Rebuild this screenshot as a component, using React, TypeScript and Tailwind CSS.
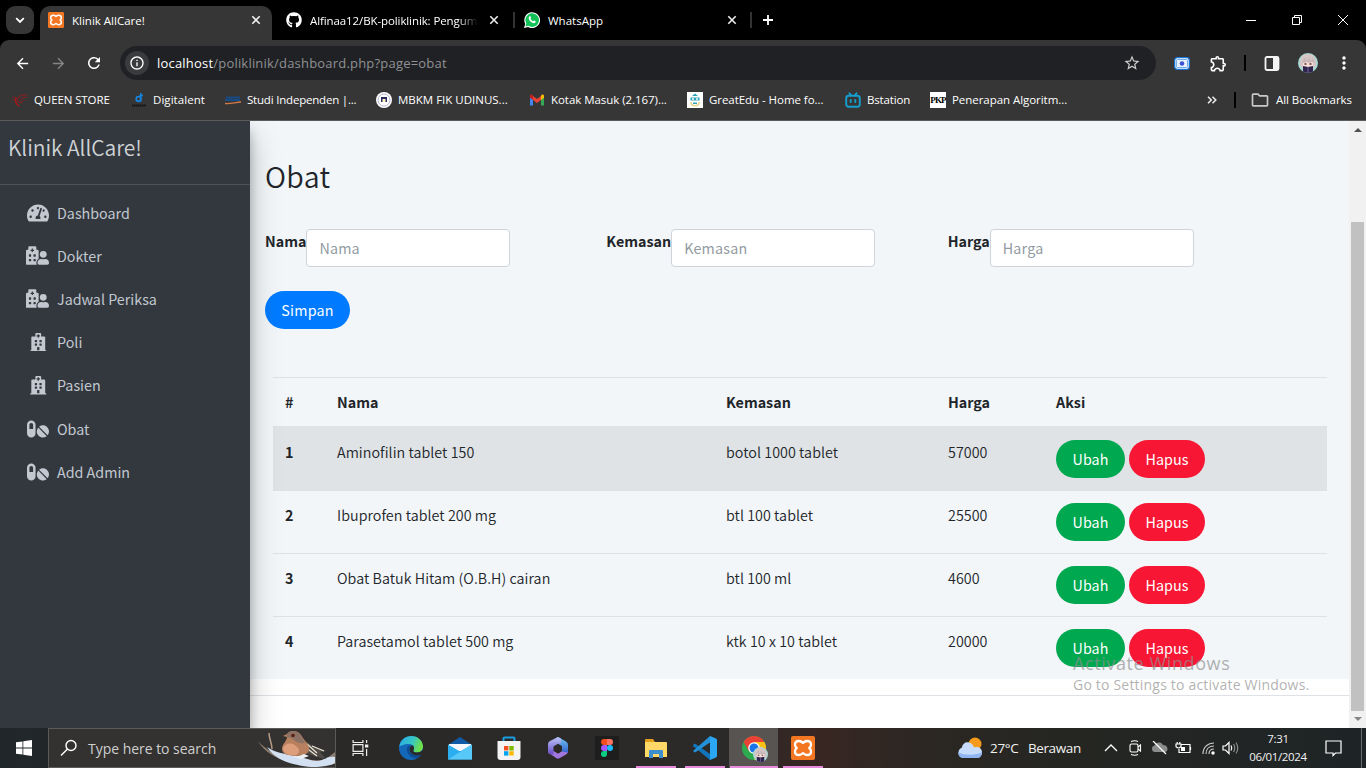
import type { ReactNode } from "react";
import {
  FaGithub,
  FaHospital,
  FaHospitalUser,
  FaPills,
  FaTachometerAlt,
} from "react-icons/fa";
import {
  MdArrowBack,
  MdArrowForward,
  MdMoreVert,
  MdOutlineExtension,
  MdOutlineFolder,
  MdOutlineInfo,
  MdRefresh,
  MdStarBorder,
} from "react-icons/md";

/* ---------- logos ---------- */

function Xampp({ size }: { size: number }) {
  return (
    <svg width={size} height={size} viewBox="0 0 24 24">
      <rect width="24" height="24" rx="2" fill="#f37623" />
      <path
        d="M8 5C5.500 5 4 6.600 4 8.600c0 1.500.7 2.700 1.800 3.400C4.700 12.700 4 13.900 4 15.400 4 17.500 5.500 19 8 19c1.700 0 2.700-.7 4-1.800 1.300 1.100 2.300 1.800 4 1.800 2.500 0 4-1.500 4-3.600 0-1.500-.7-2.700-1.800-3.400C19.300 11.300 20 10.100 20 8.600 20 6.600 18.500 5 16 5c-1.700 0-2.700.7-4 1.800C10.700 5.700 9.700 5 8 5z"
        fill="none"
        stroke="#fff"
        strokeWidth="2.300"
        strokeLinejoin="round"
      />
    </svg>
  );
}

function WhatsApp() {
  return (
    <svg width="16" height="16" viewBox="0 0 16 16">
      <path d="M0 16l1.200-4.100A7.900 7.900 0 1 1 4.200 15z" fill="#fff" />
      <path d="M1.400 14.600l.9-3.100A6.800 6.800 0 1 1 4.500 13.800z" fill="#12c157" />
      <path
        d="M5.500 4.200c.5-.4.800-.1 1 .3l.5 1.100c.1.400-.6.900-.5 1.200.5 1.100 1.400 1.900 2.500 2.400.4.100.9-.8 1.200-.7l1.300.7c.5.3 0 1.500-.8 1.800-1.500.6-3.600-.7-4.700-2C4.900 7.800 4 5.600 5.500 4.200z"
        fill="#fff"
      />
    </svg>
  );
}

function QueenIcon() {
  return (
    <svg width="16" height="16" viewBox="0 0 16 16" fill="none" stroke="#b0151a" strokeLinecap="round">
      <path d="M1 5c1.500 0 2.500.5 3 1.500M1 8c1 0 2 .3 2.500 1M14.500 3C9 2 5.500 5 5.500 8.500c.5 2.500 4 3 6 .5M14.500 5.500c-3-.5-5 .5-5.500 2.500" strokeWidth=".8" />
      <path d="M4 6c-1 3 0 6 3 8" strokeWidth="1.300" />
    </svg>
  );
}

function DigitalentIcon() {
  return (
    <svg width="16" height="16" viewBox="0 0 16 16" fill="none">
      <circle cx="7.500" cy="7" r="2.300" stroke="#1683dc" strokeWidth="1.700" />
      <path d="M9.800 1v8.500M8.500 3.500H12" stroke="#1683dc" strokeWidth="1.500" />
      <path d="M1 13.500h14" stroke="#151515" strokeWidth="2" strokeDasharray="1.500 .4" />
    </svg>
  );
}

function StudiIcon() {
  return (
    <svg width="16" height="16" viewBox="0 0 16 16" fill="none">
      <path d="M1 5.500h14M0 8h15" stroke="#174b83" strokeWidth="2" />
      <path d="M0 11.500c5 .5 10-1 16-1.500" stroke="#d07949" strokeWidth="1.300" />
    </svg>
  );
}

function MbkmIcon() {
  return (
    <svg width="16" height="16" viewBox="0 0 16 16">
      <circle cx="8" cy="8" r="8" fill="#fff" />
      <circle cx="8" cy="8" r="6" fill="none" stroke="#b3b4cc" strokeWidth="1" />
      <rect x="5" y="5" width="6" height="5" fill="#292a60" />
      <rect x="6.500" y="7" width="3" height="3" fill="#fff3c2" />
    </svg>
  );
}

function GmailIcon() {
  return (
    <svg width="16" height="16" viewBox="0 0 16 16">
      <path d="M1 4v9.500h3V6.500z" fill="#4285f4" />
      <path d="M15 4v9.500h-3V6.500z" fill="#34a853" />
      <path d="M12 4v4l3-2.300V4c0-1.300-1.500-1.900-2.400-1.200z" fill="#fbbc04" />
      <path d="M4 4v4l4 3 4-3V4L8 7z" fill="#ea4335" />
      <path d="M1 4v1.700L4 8V4l-.6-1.200C2.500 2.100 1 2.700 1 4z" fill="#c5221f" />
    </svg>
  );
}

function GreatEduIcon() {
  return (
    <svg width="16" height="16" viewBox="0 0 16 16">
      <rect width="16" height="16" fill="#fff" />
      <path d="M8 1.500L11 4H5zM3.500 5.500h9v3h-9z" fill="#2aa3b8" />
      <circle cx="6" cy="7" r="1" fill="#fff" />
      <circle cx="10" cy="7" r="1" fill="#fff" />
      <path d="M4 10c0 5 8 5 8 0" fill="none" stroke="#e6d48b" strokeWidth="1.500" />
      <path d="M6 10.500h4v1.500H6z" fill="#2aa3b8" />
    </svg>
  );
}

function BstationIcon() {
  return (
    <svg width="16" height="16" viewBox="0 0 16 16" fill="none" stroke="#159fd0" strokeWidth="1.900" strokeLinecap="round">
      <path d="M4.500 1.200l1.700 2.300M11.500 1.200L9.800 3.500M5.700 8v2M10.300 8v2" />
      <rect x="1.200" y="3.800" width="13.600" height="11" rx="2.500" />
    </svg>
  );
}

function PkpIcon() {
  return (
    <span className="flex size-4 items-center justify-center overflow-hidden bg-white font-['Liberation_Serif',serif] text-[9px] leading-none font-bold tracking-[-0.8px] text-black">
      PKP
    </span>
  );
}

function Avatar({ size }: { size: number }) {
  return (
    <svg width={size} height={size} viewBox="0 0 20 20">
      <defs>
        <clipPath id={`face${size}`}>
          <circle cx="10" cy="10" r="10" />
        </clipPath>
      </defs>
      <g clipPath={`url(#face${size})`}>
        <rect width="20" height="20" fill="#a8d8d4" />
        <path d="M2 12C1 4 6 1 10 1s9 3 8 11l-2 3H4z" fill="#d5c5c5" />
        <path d="M5 9h10v5c-2 3-8 3-10 0z" fill="#f5dfd6" />
        <path d="M4 9l3-5 2 4 2-4 2 4 2-3 2 5-3-1-3 1-2-1-3 1z" fill="#c8b6b9" />
        <path d="M6.500 11h2M11.500 11h2" stroke="#5e3434" strokeWidth="1.300" />
        <path d="M5 13l5 1 5-1v7H5z" fill="#30244e" />
        <path d="M10 14v6" stroke="#7365a0" />
      </g>
    </svg>
  );
}

/* ---------- browser chrome ---------- */

function Close() {
  return (
    <svg width="10" height="10" viewBox="0 0 10 10" stroke="#eee" strokeWidth="1.600">
      <path d="M1.300 1.300l7.400 7.400M8.700 1.300L1.300 8.700" />
    </svg>
  );
}

function TitleBar() {
  return (
    <div className="flex h-10 bg-black text-[11.5px] text-white">
      <div className="mt-1.5 ml-1.5 flex size-7 items-center justify-center rounded-[9px] bg-[#363636]">
        <svg width="10" height="7" viewBox="0 0 10 7" fill="none" stroke="#fff" strokeWidth="1.800">
          <path d="M1.200 1.200L5 5l3.800-3.800" />
        </svg>
      </div>
      <div className="mt-1.5 ml-1.5 flex h-[34px] w-[232px] items-center rounded-t-[10px] bg-[#363636] pr-[11px] pb-1.5 pl-2">
        <Xampp size={16} />
        <span className="ml-2 flex-1 pt-px">Klinik AllCare!</span>
        <Close />
      </div>
      <div className="flex w-[242px] items-center pr-[15px] pl-3.5">
        <FaGithub className="size-4 shrink-0" />
        <span className="ml-2 w-[167px] overflow-hidden pt-px tracking-[-0.1px] whitespace-nowrap [mask-image:linear-gradient(to_right,black_148px,transparent_168px)]">
          Alfinaa12/BK-poliklinik: Pengumpulan
        </span>
        <span className="ml-auto">
          <Close />
        </span>
      </div>
      <div className="flex w-[237px] items-center">
        <span className="-ml-px h-4 w-0.5 bg-[#333]" />
        <span className="ml-[9px]">
          <WhatsApp />
        </span>
        <span className="ml-2 flex-1 pt-px">WhatsApp</span>
        <span className="mr-3.5">
          <Close />
        </span>
      </div>
      <div className="flex flex-1 items-center">
        <span className="-ml-px h-4 w-0.5 bg-[#333]" />
        <svg className="ml-[10px]" width="12" height="12" viewBox="0 0 12 12" stroke="#fff" strokeWidth="1.800">
          <path d="M6 1v10M1 6h10" />
        </svg>
      </div>
      <div className="flex w-[138px]">
        <span className="flex w-[46px] items-center justify-center">
          <svg width="10" height="10" viewBox="0 0 10 10" stroke="#fff">
            <path d="M0 5.500h10" />
          </svg>
        </span>
        <span className="flex w-[46px] items-center justify-center">
          <svg width="10" height="10" viewBox="0 0 10 10" stroke="#fff" fill="none">
            <path d="M.5 2.500h7v7h-7zM2.500 2.500v-2h7v7h-2" />
          </svg>
        </span>
        <span className="flex w-[46px] items-center justify-center">
          <svg width="10" height="10" viewBox="0 0 10 10" stroke="#fff">
            <path d="M0 0l10 10M10 0L0 10" />
          </svg>
        </span>
      </div>
    </div>
  );
}

function Toolbar() {
  return (
    <div className="bg-black">
      <div className="flex h-[46px] items-center rounded-t-[9px] bg-[#363636] text-white">
        <span className="flex w-11 justify-center">
          <MdArrowBack className="size-[17px]" />
        </span>
        <span className="flex w-7 justify-center text-[#858585]">
          <MdArrowForward className="size-[17px]" />
        </span>
        <span className="flex w-11 justify-center">
          <MdRefresh className="size-[18px]" />
        </span>
        <div className="ml-1 flex h-[34px] w-[1036px] items-center rounded-full bg-[#202124] pr-[15px] pl-[5px]">
          <span className="flex size-6 items-center justify-center rounded-full bg-[#3a3b3d]">
            <MdOutlineInfo className="size-4" />
          </span>
          <span className="ml-2 flex-1 pt-px text-[13px] tracking-[0.2px] text-[#8f9194]">
            <span className="text-white">localhost</span>/poliklinik/dashboard.php?page=obat
          </span>
          <MdStarBorder className="size-[18px] text-[#cfcfcf]" />
        </div>
        <svg className="ml-[18px]" width="16" height="13" viewBox="0 0 16 13">
          <rect x=".7" y=".7" width="14.600" height="11.600" rx="2.500" fill="#fff" stroke="#1973d8" strokeWidth="1.300" />
          <rect x="2.500" y="2.500" width="11" height="8" rx="1" fill="#e8f1ff" stroke="#3b8ae4" strokeWidth=".7" />
          <circle cx="8" cy="6.500" r="2.300" fill="#3f51d0" />
        </svg>
        <MdOutlineExtension className="ml-[19px] size-[19px]" />
        <span className="ml-4 h-4 w-0.5 bg-black" />
        <svg className="ml-[18px]" width="16" height="15" viewBox="0 0 16 15">
          <rect x="1.500" y="1" width="13" height="13" rx="1.500" fill="none" stroke="#f4f4f4" strokeWidth="1.800" />
          <path d="M9 1h5v13H9z" fill="#f4f4f4" />
        </svg>
        <span className="ml-[18px]">
          <Avatar size={20} />
        </span>
        <MdMoreVert className="ml-[16px] size-5" />
      </div>
    </div>
  );
}

function Bookmark({ icon, label, box }: { icon: ReactNode; label: string; box: string }) {
  return (
    <div className={`flex shrink-0 items-center whitespace-nowrap ${box}`}>
      {icon}
      <span className="ml-1.5">{label}</span>
    </div>
  );
}

function BookmarksBar() {
  return (
    <div className="flex h-[35px] items-center border-b border-[#5b5b5b] bg-[#363636] pb-1.5 pl-3 text-[11.5px] tracking-[-0.05px] text-white">
      <Bookmark icon={<QueenIcon />} label="QUEEN STORE" box="w-[119px] tracking-[-0.1px]" />
      <Bookmark icon={<DigitalentIcon />} label="Digitalent" box="w-[94px] tracking-[0.05px]" />
      <Bookmark icon={<StudiIcon />} label="Studi Independen |..." box="w-[151px] tracking-[-0.2px]" />
      <Bookmark icon={<MbkmIcon />} label="MBKM FIK UDINUS..." box="w-[153px] tracking-[0px]" />
      <Bookmark icon={<GmailIcon />} label="Kotak Masuk (2.167)..." box="w-[158px]" />
      <Bookmark icon={<GreatEduIcon />} label="GreatEdu - Home fo..." box="w-[158px]" />
      <Bookmark icon={<BstationIcon />} label="Bstation" box="w-[85px] tracking-[-0.15px]" />
      <Bookmark icon={<PkpIcon />} label="Penerapan Algoritm..." box="w-[277px]" />
      <svg width="10" height="8" viewBox="0 0 10 8" fill="none" stroke="#eee" strokeWidth="1.500">
        <path d="M1 .7L4.300 4 1 7.300M5.500.7L8.800 4 5.500 7.300" />
      </svg>
      <span className="ml-[17px] h-4 w-0.5 bg-black" />
      <MdOutlineFolder className="ml-[14px] size-[20px] text-[#c9c9c9]" />
      <span className="ml-[6px] whitespace-nowrap">All Bookmarks</span>
    </div>
  );
}

/* ---------- web page ---------- */

const menu = [
  { label: "Dashboard", Icon: FaTachometerAlt, size: "size-[22px]" },
  { label: "Dokter", Icon: FaHospitalUser, size: "size-[23px]" },
  { label: "Jadwal Periksa", Icon: FaHospitalUser, size: "size-[23px]" },
  { label: "Poli", Icon: FaHospital, size: "ml-0.5 size-[18.500px]" },
  { label: "Pasien", Icon: FaHospital, size: "ml-0.5 size-[18.500px]" },
  { label: "Obat", Icon: FaPills, size: "size-[22px]" },
  { label: "Add Admin", Icon: FaPills, size: "size-[22px]" },
];

const rows = [
  { no: 1, nama: "Aminofilin tablet 150", kemasan: "botol 1000 tablet", harga: 57000 },
  { no: 2, nama: "Ibuprofen tablet 200 mg", kemasan: "btl 100 tablet", harga: 25500 },
  { no: 3, nama: "Obat Batuk Hitam (O.B.H) cairan", kemasan: "btl 100 ml", harga: 4600 },
  { no: 4, nama: "Parasetamol tablet 500 mg", kemasan: "ktk 10 x 10 tablet", harga: 20000 },
];

function Sidebar() {
  return (
    <aside className="z-10 flex w-[250px] shrink-0 flex-col bg-[#32383e] text-[#c2c7d0] shadow-[0_14px_28px_rgba(0,0,0,0.25),0_10px_10px_rgba(0,0,0,0.22)]">
      <div className="h-16 border-b border-[#4b545c] pt-[11px] pl-2 text-[21px] leading-[30px] font-[350] tracking-[-0.05px] text-[#d0d3d6]">
        Klinik AllCare!
      </div>
      <nav className="flex flex-col pt-1.5">
        {menu.map(({ label, Icon, size }) => (
          <div key={label} className="flex h-[43.200px] items-center pl-6">
            <span className="flex w-[27px] justify-center">
              <Icon className={size} />
            </span>
            <span className="ml-1.5 text-[14.300px] leading-6">{label}</span>
          </div>
        ))}
      </nav>
    </aside>
  );
}

function Field({ label }: { label: string }) {
  return (
    <div className="flex w-[341.330px] items-start">
      <label className="leading-6 font-bold whitespace-nowrap">{label}</label>
      <input
        placeholder={label}
        className="h-[38px] w-[204px] rounded border border-[#ced4da] bg-white px-3 pb-0.5 tracking-[0.2px] placeholder:text-[#939ba2]"
      />
    </div>
  );
}

function Content() {
  return (
    <main className="flex min-w-0 flex-1 flex-col bg-white font-['Noto_Sans_CJK_SC',sans-serif] text-[14.300px] text-[#212529]">
      <div className="h-[558px] bg-[#f2f6f9] pl-[15px]">
        <h1 className="pt-[35px] text-[28.500px] leading-[40px] font-[350] tracking-[0.3px]">Obat</h1>
        <div className="mt-[33px] flex">
          <Field label="Nama" />
          <Field label="Kemasan" />
          <Field label="Harga" />
        </div>
        <button className="mt-6 h-[38px] w-[85px] rounded-full bg-[#007bff] tracking-[0.2px] text-white">Simpan</button>
        <div className="mt-12 ml-2 w-[1054px]">
          <div className="grid h-[49px] grid-cols-[52px_389px_222px_108px_1fr] items-start border-t border-[#dee2e6] px-3 pt-3 leading-6 font-bold">
            <span>#</span>
            <span>Nama</span>
            <span>Kemasan</span>
            <span>Harga</span>
            <span>Aksi</span>
          </div>
          {rows.map((r) => (
            <div
              key={r.no}
              className="grid h-[63px] grid-cols-[52px_389px_222px_108px_1fr] items-start border-t border-[#dee2e6] px-3 pt-3 leading-6 font-[350] nth-2:h-[64px] nth-2:bg-[#dfe3e6] nth-2:pt-[13px]"
            >
              <span className="font-bold">{r.no}</span>
              <span className="tracking-[0.05px]">{r.nama}</span>
              <span className="tracking-[0.05px]">{r.kemasan}</span>
              <span className="tracking-[0.05px]">{r.harga}</span>
              <span className="flex gap-1 font-normal tracking-[0.1px] text-white">
                <button className="h-[38px] w-[69px] rounded-full bg-[#00a84f]">Ubah</button>
                <button className="h-[38px] w-[76px] rounded-full bg-[#f71735]">Hapus</button>
              </span>
            </div>
          ))}
        </div>
      </div>
      <footer className="mt-4 border-t border-[#dee2e6]" />
    </main>
  );
}

function Scrollbar() {
  return (
    <div className="flex w-[17px] flex-col items-center bg-[#f1f1f1]">
      <svg className="mt-1.5 shrink-0" width="8" height="5" viewBox="0 0 8 5">
        <path d="M0 5l4-4 4 4z" fill="#505050" />
      </svg>
      <div className="mt-[90px] h-[489px] w-[13px] shrink-0 bg-[#c1c1c1]" />
      <svg className="mt-1.5 shrink-0" width="8" height="5" viewBox="0 0 8 5">
        <path d="M0 0l4 4 4-4z" fill="#868686" />
      </svg>
    </div>
  );
}

/* ---------- taskbar ---------- */

function TaskApp({ children, active, open }: { children: ReactNode; active?: boolean; open?: boolean }) {
  return (
    <div className={`flex h-10 w-[49px] shrink-0 flex-col items-center ${active ? "bg-[#585452]" : ""}`}>
      <div className="flex h-[38px] items-center pt-0.5">{children}</div>
      {(open || active) && <span className={`h-0.5 bg-[#e68bdc] ${active ? "w-12" : "w-10"}`} />}
    </div>
  );
}

function Bird() {
  return (
    <svg className="shrink-0" width="78" height="38" viewBox="0 0 78 38">
      <path d="M1 12c8 9 16 13 27 14 15 2 30 8 41 4l9-7v12c-13 3-27 2-36 0-15-2-33-9-41-23z" fill="#8d7c70" />
      <path d="M10 18c9 6 18 7 29 9 11 2 18 7 26 4 6-3 8-4 13-3v6c-9 5-27 5-37 2-11-2-23-6-31-18z" fill="#d3e0f2" />
      <path d="M15 20C15 14 12 10 12 4" fill="none" stroke="#b79b85" strokeWidth="1.500" />
      <path d="M48 12l12 7 10 3-7 1 6 7-9-2-12-4z" fill="#4f4a45" />
      <path d="M50 15l10 9M48 18l12 9M55 17l12 5" stroke="#ece6d6" strokeWidth="1.200" />
      <path d="M25 20c0-5 5-8 5-12l-4-1 4-2c2-4 11-4 14 1 2 4 6 7 8 12 1 6-4 9-12 9-9 0-15-2-15-7z" fill="#b9805f" />
      <path d="M30 5c3-4 10-4 13 0l5 9c-4 1-9 0-12-4l-6-2z" fill="#8c7264" />
      <path d="M26 19c2-5 9-6 13-2 4 3 4 7 0 9-8 1-13-2-13-7z" fill="#dd9f7b" />
      <circle cx="36" cy="6.500" r="1.800" fill="#5c1d12" />
      <path d="M31 26c6 2 10 2 16-1l5 2-8 3z" fill="#eef1f5" />
    </svg>
  );
}

function Taskbar() {
  return (
    <div className="flex h-10 bg-[linear-gradient(to_right,#20272a_0%,#2a2927_20%,#2b2a29_53%,#382622_60%,#2c2723_67%,#252622_78%,#1e2426_100%)] text-[#f2f2f2]">
      <span className="flex w-12 shrink-0 items-center justify-center">
        <svg width="16" height="16" viewBox="0 0 16 16" fill="#fff">
          <path d="M0 2.300l6.500-.9v6.200H0zM7.300 1.300L16 0v7.600H7.300zM0 8.400h6.500v6.200L0 13.700zM7.300 8.400H16V16l-8.700-1.300z" />
        </svg>
      </span>
      <div className="flex h-10 w-[288px] shrink-0 items-center overflow-hidden border border-[#5c5a58] bg-[#333231] pl-[11px]">
        <svg className="shrink-0" width="18" height="18" viewBox="0 0 18 18" fill="none" stroke="#fff" strokeWidth="1.400">
          <circle cx="11" cy="6.500" r="5" />
          <path d="M7.500 10L1 16.500" />
        </svg>
        <span className="ml-[10px] w-[169px] shrink-0 text-[14px] tracking-[-0.03px] whitespace-nowrap text-[#cfcfcf]">
          Type here to search
        </span>
        <Bird />
      </div>
      <div className="flex w-[50px] shrink-0 items-center justify-center pr-0.5">
        <svg width="17" height="16" viewBox="0 0 17 16" fill="none" stroke="#eee" strokeWidth="1.200">
          <path d="M1.100 4.600h9.800v6.800H1.100zM1.100 0v2.500h9.800V0M1.100 16v-2.500h9.800V16M14.600 0v3M14.600 9v7" />
          <path d="M13 4.500h3.300v3H13z" fill="#eee" stroke="none" />
        </svg>
      </div>
      <TaskApp>
        <svg width="24" height="24" viewBox="0 0 24 24">
          <defs>
            <linearGradient id="edgeWave" x1="0" y1="0" x2="1" y2=".3">
              <stop offset="0" stopColor="#2aa8e8" />
              <stop offset=".6" stopColor="#37c6c4" />
              <stop offset="1" stopColor="#6fe04a" />
            </linearGradient>
          </defs>
          <circle cx="12" cy="12" r="12" fill="#1468b8" />
          <path d="M.3 10.500C1.500 4 6.500 0 12.300 0 19 0 24 5 24 10.500c0 4-3 6-6.200 6-3 0-4-1.200-3.300-2.200 1.300-2 .8-6.300-4.700-6.300C5 8 1.500 10 .3 10.500z" fill="url(#edgeWave)" />
          <path d="M8 13c0 5 4 9.500 9.500 9.300 2-.6 4-2 5-3.800-5 2-12 .5-12.500-5 0-2 1-3.200 2-4C9.500 9.500 8 11 8 13z" fill="#0d4a91" />
          <path d="M14.500 14.300c-.7 1 .3 2.200 3.300 2.200 2.600 0 5-.8 5.900-3.500L24 18l-1 .5c-5 2-12 .5-12.500-5 .1-2 1.300-3.500 2.700-4.200 2 1 2.300 3.500 1.300 5z" fill="#2a2928" />
        </svg>
      </TaskApp>
      <TaskApp>
        <svg width="24" height="23" viewBox="0 0 24 23">
          <path d="M0 8L12 0l12 8v14H0z" fill="#0f5ba8" />
          <path d="M1 7h22v7H1z" fill="#f4f8fc" />
          <path d="M0 7.500l12 7 12-7V22.500H0z" fill="#2aaef0" />
          <path d="M0 22.500l24-15v15z" fill="#58c8f8" />
        </svg>
      </TaskApp>
      <TaskApp>
        <svg width="24" height="24" viewBox="0 0 24 24">
          <path d="M6.500 6V2.500q0-1 1-1h9q1 0 1 1V6" fill="none" stroke="#1b9de2" strokeWidth="2" />
          <path d="M.5 5h23v16q0 3-3 3h-17q-3 0-3-3z" fill="#f3f3f3" />
          <path d="M7 10h4.400v4.400H7z" fill="#f25022" />
          <path d="M12.300 10h4.400v4.400h-4.400z" fill="#7fba00" />
          <path d="M7 15.200h4.400v4.400H7z" fill="#00a4ef" />
          <path d="M12.300 15.200h4.400v4.400h-4.400z" fill="#ffb900" />
        </svg>
      </TaskApp>
      <TaskApp>
        <svg width="22" height="22" viewBox="0 0 22 22">
          <defs>
            <linearGradient id="officeLeft" x1="0" y1="0" x2="0" y2="1">
              <stop offset="0" stopColor="#b9c6f8" />
              <stop offset="1" stopColor="#6a4bc7" />
            </linearGradient>
            <linearGradient id="officeRight" x1="0" y1="0" x2="0" y2="1">
              <stop offset="0" stopColor="#72c7f5" />
              <stop offset="1" stopColor="#3663cf" />
            </linearGradient>
          </defs>
          <path d="M1 15.500l8.500 5.800q1.500.8 3 0L19 17.500q2-1 2-3l-6-.5-4 2.500-4-2.500z" fill="#a277dc" />
          <path d="M11 0l8 4.500Q21 5.500 21 8v7.500l-6-1V9.500L8.500 6 8 2z" fill="url(#officeRight)" />
          <path d="M11 0L3 4Q1 5 1 7v8q0 1.500 1.500 2l4 .5V9.500L14 6V1.500z" fill="url(#officeLeft)" />
          <path d="M11 6.800l4 2.400v4.800L11 16.500l-4-2.500V9.200z" fill="#2a2928" />
        </svg>
      </TaskApp>
      <TaskApp>
        <div className="flex size-6 items-center justify-center bg-[#1f1e1e]">
          <svg width="12" height="18" viewBox="0 0 12 18">
            <path d="M3 0h3v6H3a3 3 0 0 1 0-6z" fill="#f24e1e" />
            <path d="M6 0h3a3 3 0 0 1 0 6H6z" fill="#ff7262" />
            <path d="M3 6h3v6H3a3 3 0 0 1 0-6z" fill="#a259ff" />
            <circle cx="9" cy="9" r="3" fill="#1abcfe" />
            <path d="M3 12h3v3a3 3 0 1 1-3-3z" fill="#0acf83" />
          </svg>
        </div>
      </TaskApp>
      <TaskApp open>
        <svg width="22" height="19" viewBox="0 0 22 19">
          <path d="M0 1q0-1 1-1h7l2 3H0z" fill="#e3a01c" />
          <path d="M0 3h21q1 0 1 1v14H0z" fill="#ffd868" />
          <path d="M4 19v-7q0-1 1-1h12q1 0 1 1v7h-4v-4H8v4z" fill="#3c8fcc" />
        </svg>
      </TaskApp>
      <TaskApp open>
        <svg width="24" height="24" viewBox="0 0 24 24">
          <path d="M0 9l2-1.500L17 18v6L0 10z" fill="#1176bb" />
          <path d="M0 15L17 0v6.500L2 16.500z" fill="#2390d8" />
          <path d="M17 0l6 2.600q1 .5 1 1.500v16q0 1-1 1.400L17 24z" fill="#2aa6f2" />
        </svg>
      </TaskApp>
      <TaskApp active>
        <div className="relative size-6">
          <svg width="24" height="24" viewBox="0 0 24 24">
            <circle cx="12" cy="12" r="12" fill="#2da94f" />
            <path d="M1.600 6A12 12 0 0 1 22.400 6H12v7z" fill="#ea4335" />
            <path d="M1.600 6l5.200 9L12 6z" fill="#ea4335" />
            <path d="M12 6h10.400A12 12 0 0 1 12 24l5.200-9z" fill="#fbc116" />
            <circle cx="12" cy="12" r="5.800" fill="#fff" />
            <circle cx="12" cy="12" r="4.500" fill="#1a73e8" />
          </svg>
          <span className="absolute top-[11px] left-[11px]">
            <Avatar size={15} />
          </span>
        </div>
      </TaskApp>
      <TaskApp open>
        <Xampp size={24} />
      </TaskApp>
      <div className="flex min-w-0 flex-1 items-center pl-[130px] *:shrink-0">
        <svg width="26" height="22" viewBox="0 0 26 22">
          <circle cx="18" cy="7" r="6.500" fill="#f59a1b" />
          <path d="M6 21a5.500 5.500 0 0 1-1-10.500C5.500 6 10 4 13.500 6c2 1 3 3 3.500 4.500C22 9 25 12 25 15.500c0 3.500-2.500 5.500-5 5.500z" fill="#c7dcfb" />
          <path d="M1 15c3 3 19 4 24 0 0 4-2.500 6-5 6H6c-3 0-5-3-5-6z" fill="#8fb4f0" />
        </svg>
        <span className="ml-[7px] w-[38px] text-[13.500px] tracking-[-0.3px]">27°C</span>
        <span className="w-[76px] text-[13.500px] tracking-[-0.4px]">Berawan</span>
        <svg width="14" height="8" viewBox="0 0 14 8" fill="none" stroke="#fff" strokeWidth="1.300">
          <path d="M1 7l6-6 6 6" />
        </svg>
        <svg className="ml-[11px]" width="13" height="16" viewBox="0 0 13 16" fill="none" stroke="#fff" strokeWidth="1.100">
          <rect x="1" y="4" width="8" height="8" rx="1.500" />
          <path d="M9 7l2.500-2v6L9 9M2 1.500q4-1.500 7 0M2 14.500q4 1.500 7 0" />
        </svg>
        <svg className="ml-[9px]" width="17" height="14" viewBox="0 0 17 14">
          <path d="M4 11a3.300 3.300 0 0 1-.5-6.500C5 1 10 0 12 4c3 0 4.500 2 4.500 4 0 1.800-1 3-3 3z" fill="#8b8d8c" />
          <path d="M2 0l13 13" stroke="#fff" strokeWidth="1.300" />
        </svg>
        <svg className="ml-[7px]" width="17" height="14" viewBox="0 0 17 14" fill="none" stroke="#fff" strokeWidth="1.200">
          <path d="M6 3.500h9v8H4V8M15.500 6v3M1 3h5v2.500q-2.500 3-5 0zM2.200 3V1M4.800 3V1" />
          <path d="M6 6h4v4H6z" fill="#fff" stroke="none" />
        </svg>
        <svg className="ml-[10px]" width="13" height="13" viewBox="0 0 13 13" fill="none" stroke="#c9c9c9" strokeWidth="1.200">
          <path d="M1 12C1 5 6 1 12 1M4 12c0-5 3-8 8-8M7 12c0-3 2-5 5-5" />
          <circle cx="11" cy="11" r="1.700" fill="#fff" stroke="none" />
        </svg>
        <svg className="ml-[7px]" width="17" height="14" viewBox="0 0 17 14" fill="none" stroke="#fff" strokeWidth="1.200">
          <path d="M1 5h2.500L7 1.500v11L3.500 9H1zM9 4.500q1.500 2.500 0 5" />
          <path d="M11.500 3q2.500 4 0 8M14 1.500q3.500 5.500 0 11" stroke="#8b8b8b" />
        </svg>
      </div>
      <div className="flex w-[78px] shrink-0 flex-col items-center justify-center text-[11.500px] leading-[18px] tracking-[-0.35px]">
        <span>7:31</span>
        <span>06/01/2024</span>
      </div>
      <div className="flex w-[44px] shrink-0 items-center pl-[8px]">
        <svg width="17" height="17" viewBox="0 0 17 17" fill="none" stroke="#fff" strokeWidth="1.200">
          <path d="M1 1h15v12h-5.500L8 15.500V13H1z" />
        </svg>
      </div>
      <span className="mr-1 h-10 w-px shrink-0 bg-[#6a6d6e]" />
    </div>
  );
}

export default function App() {
  return (
    <div className="relative flex h-[768px] w-[1366px] flex-col overflow-hidden font-['Open_Sans',sans-serif]">
      <TitleBar />
      <Toolbar />
      <BookmarksBar />
      <div className="flex h-[607px] overflow-hidden font-['Noto_Sans_CJK_SC',sans-serif]">
        <Sidebar />
        <Content />
        <Scrollbar />
      </div>
      <Taskbar />
      <div className="absolute top-[651px] left-[1073px] z-20 whitespace-nowrap text-[#8f8f8f]/70">
        <div className="text-[18px] leading-6 tracking-[0.6px]">Activate Windows</div>
        <div className="text-[14px] leading-5 tracking-[0.2px]">Go to Settings to activate Windows.</div>
      </div>
    </div>
  );
}
